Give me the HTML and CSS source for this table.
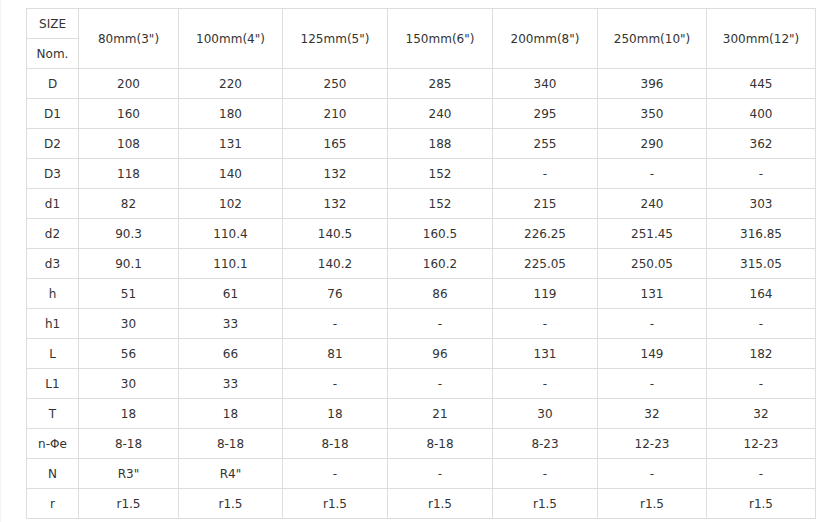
FILE: index.html
```html
<!DOCTYPE html>
<html>
<head>
<meta charset="utf-8">
<link rel="stylesheet" href="styles.css">
</head>
<body>
<div class="page">
<table class="spec">
<colgroup>
<col class="c1"><col class="c2"><col class="c3"><col class="c4"><col class="c5"><col class="c6"><col class="c7"><col class="c8">
</colgroup>
<tbody>
<tr><td>SIZE</td><td rowspan="2">80mm(3")</td><td rowspan="2">100mm(4")</td><td rowspan="2">125mm(5")</td><td rowspan="2">150mm(6")</td><td rowspan="2">200mm(8")</td><td rowspan="2">250mm(10")</td><td rowspan="2">300mm(12")</td></tr>
<tr><td>Nom.</td></tr>
<tr><td>D</td><td>200</td><td>220</td><td>250</td><td>285</td><td>340</td><td>396</td><td>445</td></tr>
<tr><td>D1</td><td>160</td><td>180</td><td>210</td><td>240</td><td>295</td><td>350</td><td>400</td></tr>
<tr><td>D2</td><td>108</td><td>131</td><td>165</td><td>188</td><td>255</td><td>290</td><td>362</td></tr>
<tr><td>D3</td><td>118</td><td>140</td><td>132</td><td>152</td><td>-</td><td>-</td><td>-</td></tr>
<tr><td>d1</td><td>82</td><td>102</td><td>132</td><td>152</td><td>215</td><td>240</td><td>303</td></tr>
<tr><td>d2</td><td>90.3</td><td>110.4</td><td>140.5</td><td>160.5</td><td>226.25</td><td>251.45</td><td>316.85</td></tr>
<tr><td>d3</td><td>90.1</td><td>110.1</td><td>140.2</td><td>160.2</td><td>225.05</td><td>250.05</td><td>315.05</td></tr>
<tr><td>h</td><td>51</td><td>61</td><td>76</td><td>86</td><td>119</td><td>131</td><td>164</td></tr>
<tr><td>h1</td><td>30</td><td>33</td><td>-</td><td>-</td><td>-</td><td>-</td><td>-</td></tr>
<tr><td>L</td><td>56</td><td>66</td><td>81</td><td>96</td><td>131</td><td>149</td><td>182</td></tr>
<tr><td>L1</td><td>30</td><td>33</td><td>-</td><td>-</td><td>-</td><td>-</td><td>-</td></tr>
<tr><td>T</td><td>18</td><td>18</td><td>18</td><td>21</td><td>30</td><td>32</td><td>32</td></tr>
<tr><td>n-Φe</td><td>8-18</td><td>8-18</td><td>8-18</td><td>8-18</td><td>8-23</td><td>12-23</td><td>12-23</td></tr>
<tr><td>N</td><td>R3"</td><td>R4"</td><td>-</td><td>-</td><td>-</td><td>-</td><td>-</td></tr>
<tr><td>r</td><td>r1.5</td><td>r1.5</td><td>r1.5</td><td>r1.5</td><td>r1.5</td><td>r1.5</td><td>r1.5</td></tr>
</tbody>
</table>
</div>
</body>
</html>
```

FILE: styles.css
```css
html, body {
  margin: 0;
  padding: 0;
  background: #ffffff;
}
.page {
  border-left: 1px solid #f3f3f3;
  padding: 8px 0 0 25px;
  min-height: 514px;
}
.spec {
  border-collapse: collapse;
  table-layout: fixed;
  width: 790px;
  font-family: "DejaVu Sans", Verdana, sans-serif;
  font-size: 12px;
  color: #333333;
}
.spec td {
  border: 1px solid #dddddd;
  height: 29px;
  padding: 0;
  text-align: center;
  vertical-align: middle;
  line-height: 14px;
}
.c1 { width: 52px; }
.c2 { width: 100px; }
.c3 { width: 104px; }
.c4 { width: 105px; }
.c5 { width: 105px; }
.c6 { width: 105px; }
.c7 { width: 109px; }
.c8 { width: 109px; }
```
